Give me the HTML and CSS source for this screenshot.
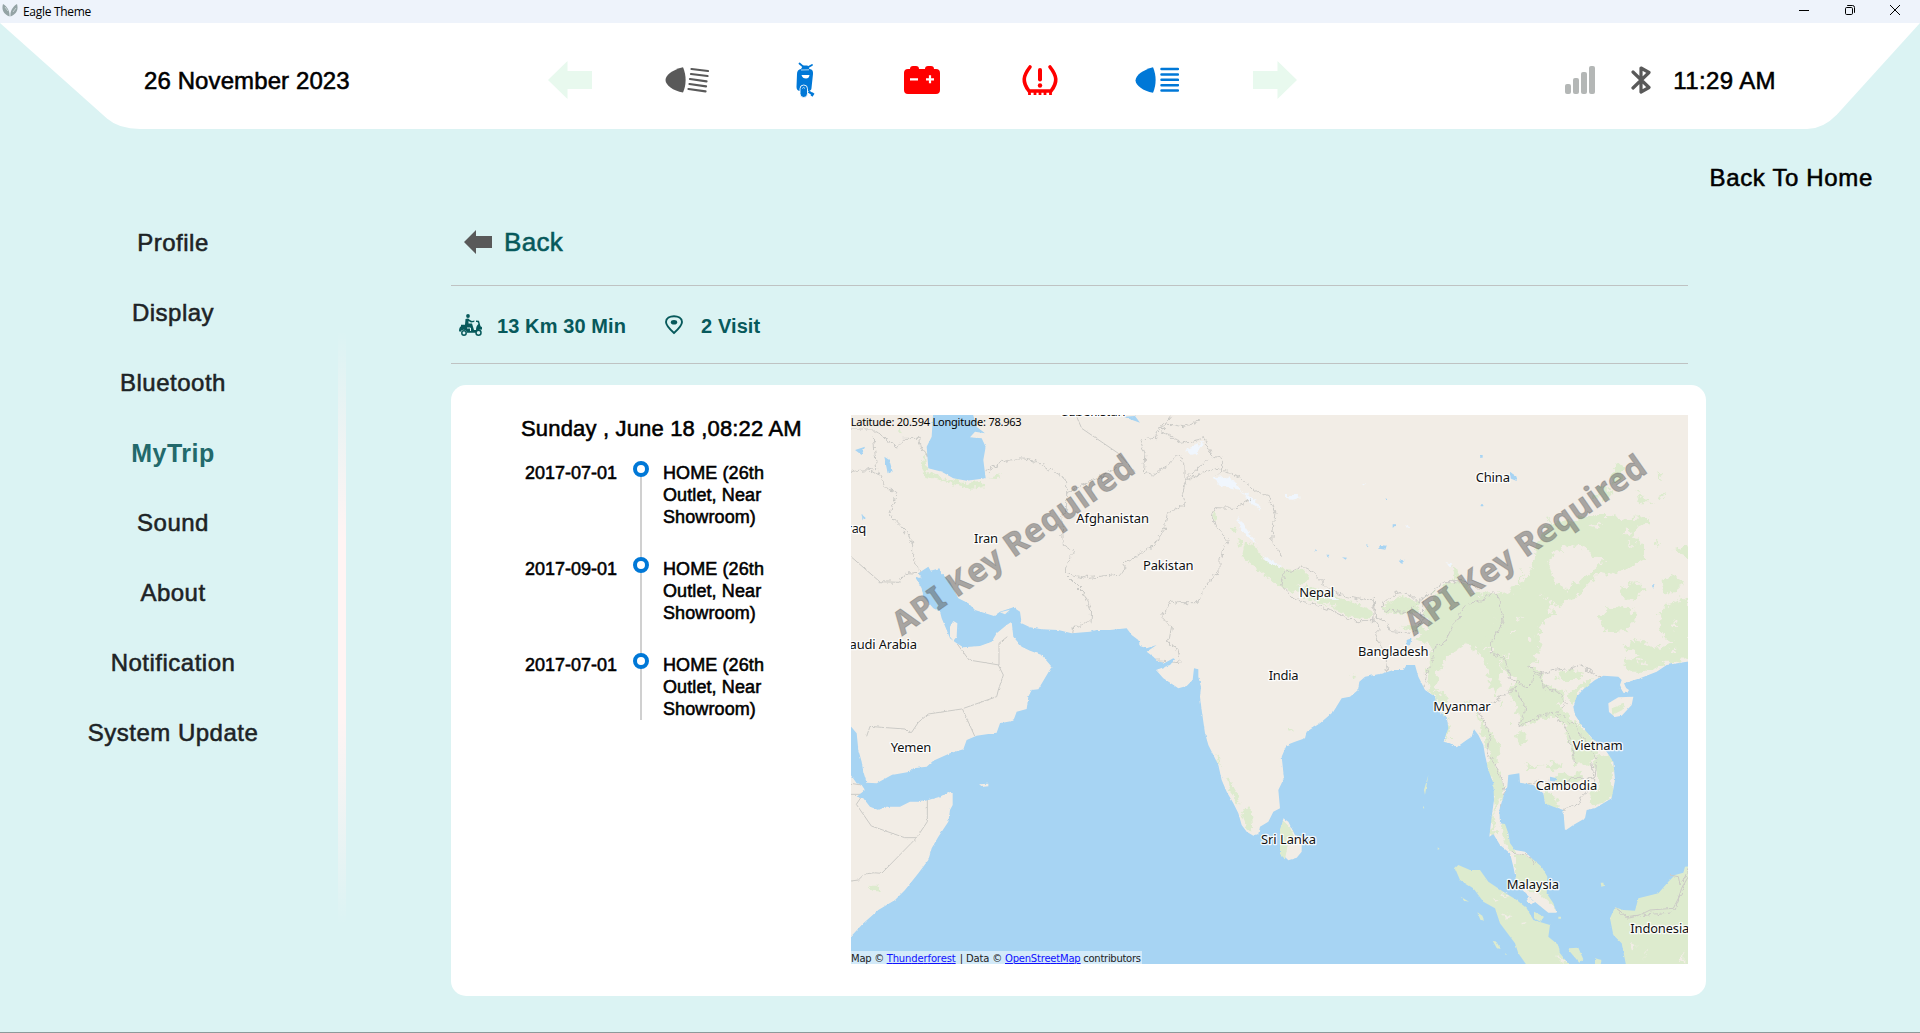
FILE: index.html
```html
<!DOCTYPE html>
<html lang="en">
<head>
<meta charset="utf-8">
<title>Eagle Theme</title>
<link rel="stylesheet" href="styles.css">
</head>
<body>
<div class="titlebar">
  <svg class="logo" viewBox="0 0 16 13"><path d="M1 0C-.5 5 1 10 7.500 12.500 8 8 6 3 1 0zM15 0C16.500 5 15 10 8.500 12.500 8 8 10 3 15 0z" fill="#94a3a5"/><path d="M3 3l3 4M14 4l-3 4" stroke="#d6dfe2" stroke-width=".8"/></svg>
  <span class="app-name">Eagle Theme</span>
  <div class="window-buttons">
    <svg viewBox="0 0 12 12"><path d="M1 6.500h10"/></svg>
    <svg viewBox="0 0 12 12"><path d="M3.200 1.500h5.300q2 0 2 2v5.300"/><rect x="1.500" y="3.500" width="7" height="7" rx="1.200"/></svg>
    <svg viewBox="0 0 12 12"><path d="M1 1l10 10M11 1L1 11"/></svg>
  </div>
</div>

<header class="header">
  <svg class="header-shape" viewBox="0 0 1920 106" preserveAspectRatio="none"><path d="M0 0H1920L1837 91.500Q1823 106 1807 106H140Q119 106 107 95.500Z" fill="#fff"/></svg>
  <div class="date">26 November 2023</div>
  <div class="indicators">
    <svg width="44" height="38" viewBox="0 0 44 38"><path d="M0 19L19.500 0V10H44V28H19.500V38Z" fill="#e8f9ee"/></svg>
    <svg width="44" height="26" viewBox="0 0 44 26"><path d="M18 .3C7 3 .8 8 .5 13 .5 18 8 24 18 25.400 21.500 18 21.500 8 18 .3z" fill="#595959"/><path d="M26.500 2l16.500 2M26 7l16.500 2M25 12l16.500 2.300M24.500 17l16.500 2.300M23.500 22l17 2.300" stroke="#595959" stroke-width="2.200" stroke-linecap="round"/></svg>
    <svg width="20" height="36" viewBox="0 0 20 36"><path d="M4.500 1.500l4 3.500 4 .5 4.500-2.500" fill="none" stroke="#0078d7" stroke-width="1.800" stroke-linecap="round"/><path d="M8 3.500h4.500l2 3.500c3 .5 3.700 2 3.500 5L16.500 26q0 2.500-3 3l-8 0Q1.500 29 1.500 25L2 12c0-3 1.500-4.500 4-5z" fill="#0078d7"/><path d="M6 8l8-.2" stroke="#fff" stroke-width=".7"/><path d="M6.500 13h8q-.5 3.500-3.500 3.500-3.500 0-4.500-3.500z" fill="#fff"/><rect x="5" y="23" width="7.500" height="12.500" rx="3.700" fill="#0078d7" stroke="#fff" stroke-width=".9"/><path d="M7.200 26.500q1.400-2 2.800 0" stroke="#fff" fill="none" stroke-width=".7"/><path d="M13.500 29.500l4.500 3M16.500 34l2-3" stroke="#0078d7" stroke-width="2.400"/></svg>
    <svg width="38" height="28" viewBox="0 0 38 28"><path d="M5 3h2q0-3 3-3h3q3 0 3 3h6q0-3 3-3h3q3 0 3 3h2q4 0 4 4v17q0 4-4 4H5q-4 0-4-4V7q0-4 4-4z" fill="red"/><path d="M7 13.300h8M23 13.300h8M27 9.300v8" stroke="#fff" stroke-width="2.200"/></svg>
    <svg width="38" height="32" viewBox="0 0 38 32"><g fill="none" stroke="red"><path d="M9 3C2 12 1 18 8 27h22C37 18 36 12 29 3" stroke-width="3.600" stroke-linecap="round"/><path d="M8.500 27v4M14 27v4M19 27v4M24 27v4M29.500 27v4" stroke-width="2.800"/><path d="M19 6v9.500" stroke-width="4" stroke-linecap="round"/></g><circle cx="19" cy="21.500" r="2.200" fill="red"/></svg>
    <svg width="44" height="26" viewBox="0 0 44 26"><path d="M18 .3C8 3 .8 8 .5 13.500.8 18.500 8 24 18 25.700 21.500 18 21.500 8 18 .3z" fill="#0078d7"/><path d="M26.500 2h16.500M26.500 7.500h16.500M26.500 12.800h16.500M26.500 18.200h16.500M26.500 23.500h16.500" stroke="#0078d7" stroke-width="2.500" stroke-linecap="round"/></svg>
    <svg width="44" height="38" viewBox="0 0 44 38"><path d="M44 19L24.500 0V10H0V28H24.500V38Z" fill="#e8f9ee"/></svg>
  </div>
  <div class="status">
    <svg class="signal" width="30" height="28" viewBox="0 0 30 28" fill="#b4b7b6"><rect y="18" width="6" height="10" rx="2"/><rect x="8" y="12" width="6" height="16" rx="2"/><rect x="16" y="6" width="6" height="22" rx="2"/><rect x="24" width="6" height="28" rx="2"/></svg>
    <svg class="bt" width="20" height="28" viewBox="0 0 20 28"><path d="M2 6l16 15.500-8 4.500V2l8 4.500L2 22" fill="none" stroke="#595959" stroke-width="3.200" stroke-linecap="round" stroke-linejoin="round"/></svg>
    <span>11:29 AM</span>
  </div>
</header>

<div class="home-row">Back To Home</div>

<main class="main">
  <nav class="menu">
    <div>Profile</div><div>Display</div><div>Bluetooth</div><div class="active">MyTrip</div><div>Sound</div><div>About</div><div>Notification</div><div>System Update</div>
  </nav>
  <div class="divider"></div>
  <section class="content">
    <div class="back">
      <svg width="28" height="24" viewBox="0 0 28 24"><path d="M0 12L12 0V6H28V18H12V24Z" fill="#595959"/></svg>
      <span>Back</span>
    </div>
    <div class="summary">
      <svg width="23" height="22" viewBox="0 0 23 22"><g fill="#07595b"><circle cx="9" cy="2" r="1.900"/><path d="M6.500 5q3-1.500 4 .7l2.500 1.300 2.500-.5-.3 1.500-3.200.5-2.500-1.500v2.500h3.500l2 6.500h2c0-3 1-5 2.500-6l-1-2h-1.500V6.500l3 .3 1.500 5.500q2 .5 2 3l-3 .5q-2 0-2 3H8q-.5-3-3.500-3-2 0-3 2l-1.500-.5q0-4 2-5v-1.500h4z"/></g><g fill="#dbf3f3" stroke="#07595b" stroke-width="1.500"><circle cx="5" cy="19" r="2.200"/><circle cx="19.500" cy="18.700" r="2.500"/></g><path d="M8 14h3.500v3" fill="none" stroke="#dbf3f3"/></svg>
      <b class="distance">13 Km 30 Min</b>
      <svg class="pin" width="20" height="20" viewBox="0 0 20 20"><path d="M10 18C5 13.500 2 10.500 2 7c0-4 4-5.800 8-5.800S18 3 18 7c0 3.500-3 6.500-8 11z" fill="none" stroke="#07595b" stroke-width="1.900"/><ellipse cx="10" cy="7.200" rx="3.200" ry="2.300" fill="#07595b"/></svg>
      <b>2 Visit</b>
    </div>
    <article class="card">
      <div class="trip">
        <h2>Sunday , June 18 ,08:22 AM</h2>
        <div class="stop"><time>2017-07-01</time><i class="track"></i><p>HOME (26th Outlet, Near Showroom)</p></div>
        <div class="stop"><time>2017-09-01</time><i class="track"></i><p>HOME (26th Outlet, Near Showroom)</p></div>
        <div class="stop last"><time>2017-07-01</time><i class="track"></i><p>HOME (26th Outlet, Near Showroom)</p></div>
      </div>
      <svg class="map" viewBox="3 15 2511 1647">
        <defs>
          <filter id="coast" x="-5%" y="-5%" width="110%" height="110%"><feTurbulence type="fractalNoise" baseFrequency=".09" numOctaves="3" seed="4"/><feDisplacementMap in="SourceGraphic" scale="7" xChannelSelector="R" yChannelSelector="G"/></filter>
          <filter id="woods" x="-5%" y="-5%" width="110%" height="110%"><feTurbulence type="fractalNoise" baseFrequency=".05" numOctaves="4" seed="9"/><feDisplacementMap in="SourceGraphic" scale="38" xChannelSelector="R" yChannelSelector="G"/></filter>
          <filter id="peaks" x="-5%" y="-5%" width="110%" height="110%"><feTurbulence type="fractalNoise" baseFrequency=".06" numOctaves="3" seed="2"/><feDisplacementMap in="SourceGraphic" scale="22" xChannelSelector="R" yChannelSelector="G"/></filter>
        </defs>
        <rect width="2520" height="1670" class="land"/>
        <g class="forest" filter="url(#peaks)">
          <path d="M222 120l10 65 50 20 60 15 50-8 10 20-45 5-60-20-65-15-18-30zM415 205l40-12-12 14zM1090 300l15 30-15-5zM1140 350l20 10-10 10zM1160 385l15 10-5 15zM1185 395l30 10 20 40 60 30 60 60-10 15-60-20-60-50-50-40z"/>
          <path d="M1225 455l50 10 45 30 -20 20-40-10zM1310 475l50 5 20 30-30 15-40-20zM1365 525l60 20 60 25 70 20 12 25-5 10-60-5-80-35-60-25zM1595 590l60-30 50 15 0 30-60 5-40-3zM1650 650l60-5 40 30-60-10z"/>
          <path d="M1096 1030l12 15 5 30-10-20zM1135 1105l20 30 15 50-30-40zM1172 1200l30-5 5 70-15-10zM55 1427l30 0 5 18-20-3zM1310 950l20 10-12 5zM1505 795l15 5-15 5zM150 50l5 20-8-2z"/>
        </g>
        <g class="forest" filter="url(#woods)">
          <path fill-rule="evenodd" d="M2140 335L2220 315 2270 315 2330 325 2400 320 2400 345 2360 355 2350 380 2385 410 2385 445 2340 465 2300 495 2250 485 2210 525 2170 570 2115 585 2100 575 2090 600 2115 610 2080 640 2060 680 2075 705 2050 740 2060 760 2040 770 2020 810 1970 795 1950 755 1930 710 1895 715 1895 670 1930 635 1930 580 1900 550 1940 550 1990 540 2030 505 2050 460 2055 410 2100 340ZM2095 460L2115 425 2160 405 2210 420 2260 455 2210 500 2150 540 2115 520Z"/>
          <path d="M1725 620L1740 570 1790 520 1830 510 1870 550 1935 560 1930 640 1895 700 1900 720 1935 715 1955 780 1940 860 1925 840 1910 770 1880 720 1850 700 1790 740 1765 780 1760 840 1738 840 1728 790 1750 710 1700 690 1735 660ZM1800 465l25 10 10 35-20-10zM2010 470l10 60-10-5z"/>
          <path d="M1975 840L2010 800 2035 770 2070 780 2080 820 2140 840 2145 870 2115 885 2160 920 2200 960 2240 1000 2235 1045 2225 1060 2170 1065 2165 1010 2145 945 2110 920 2060 930 2010 950 1995 880ZM2110 790l60-15 30 20-20 15-50 0zM2150 860l30-30 30-20 20 5-40 30-15 40z"/>
          <path d="M2245 625L2280 590 2345 595 2360 625 2330 660 2270 670ZM2425 660L2430 610 2460 580 2520 560V740L2450 760 2390 785 2340 785 2320 760 2370 735 2320 710 2370 690 2410 715 2470 700 2440 680ZM2435 520l35-25 35 15-25 40-40 0zM2310 530l40-15 35 25-35 30-35-10zM2470 420l50-12v35zM2310 385l50 5 10 25-30 0zM2410 395l20 5-5 8zM2360 240l20 20 25 20-30 0zM2295 160l30 10-10 40-30 10 0-30zM2365 275l20-20 5 20zM2425 180l14 10-10 18zM2425 255l20-10-10 20zM2250 225l40 20-20 25-40-10zM2090 330l20-4-5 14z"/>
          <path d="M2240 1030L2285 1040 2290 1110 2285 1160 2235 1190 2215 1170 2250 1120 2235 1070ZM2080 1130l30 20 20 50-45-20zM2110 1100l90-15-10 30-60 10zM1880 910L1920 960 1950 1010 1940 1060 1960 1130 1960 1160 1930 1200 1935 1270 1920 1270 1932 1170 1910 1060 1920 1030 1900 990ZM1770 900l25 20 2 60-12 20zM1995 970l30 0 10 30-30 5zM1950 870l10 20-15 5zM2020 1060l70 12-60 2zM2090 1062l50-2-30 20zM1850 870l12 3-8 8zM1738 840l50 10 10 40-25 0zM1980 930l10 4-8 8zM2010 910l4 20-8 0z"/>
        </g>
        <g class="forest" filter="url(#peaks)">
          <path d="M1995 1332L2045 1340 2085 1365 2105 1400 2105 1450 2125 1505 2090 1470 2060 1445 2020 1440 1995 1405ZM1950 1240l20 0 10 50 20 40-15 0-20-30zM2275 1350h260v340h-260z"/>
        </g>
        <g class="land" filter="url(#woods)"><path d="M2215 350l40-8-20 14zM2320 370l24-8-10 16zM2330 400l30 0-15 12zM2080 560l10 5-10 10zM2000 620l20 4-14 12zM2040 680l12 4-12 10zM1990 660l8 6-10 6zM1960 740l16-4-10 14zM2470 640l14 4-12 12zM2360 750l30 4-20 10zM2460 720l20-4-10 14zM2350 300l20 5-16 8zM1420 575l40 10-36 4z"/></g>
        <g class="snow" filter="url(#peaks)"><path d="M1005 120l55-25-20 35-15 5zM1090 205l40-5 30 20 20 30 30 10 20 40-30-20-30-40-60-15zM1160 320l20 20 20 30 20 30-30-20-20-30zM1235 440l30 10 30 20-40-10zM1305 255l35 0 10 10-30 5zM1780 457l30 3-10 10zM1840 500l40 20-30 0zM1410 545l60 25-30 0zM1665 343l10 5-5 5zM1540 218l8 2-6 4z"/></g>
        <g class="borders" filter="url(#peaks)">
          <path d="M3 187q40-15 80 0l30 50 30 5-25 70 55 60 15 30 0 40 25 50-45-5-20 30-62-2M3 60h70l20 15 50 38 20-28 45 0 10 40 30 20M70 80l10 100M90 75l50 35M410 182q90-60 165-18l75 45 0 95-15 10 5 90 30 20-28 65 60 60 20 50-2 35-50 20-5 50M642 489l70 14 110-12 5-35 80-45 35-50 10-50 55-30-10-30 15-50 60-50M870 90l45-5 50-65M870 90l15 40-5 60M650 250l150-75M880 190l30 5 45-30 30-30 20 30 0 45 60-25 40-10 60 25 60 50 30 10 20 50-10 80 30 50M1065 85l20 50 30 10 0 40-15 10M930 60l60 40 75-15M920 70l20-30 60 10 50-20M1205 265l-50 30-60-2-10 20 15 40 35 40-25 50 0 35-50 60-15 40-60 0-20-5-30 45 30 30-10 55 30 15 5 40-60-5-50 3"/>
          <path d="M1292 525l10-35 50-20 40 20 50 50 50 20 60 12 20-5 0 65-60 0-70-30-70-25-40-10zM1570 560l10 65 20 5 25 35 60 5 30-30 5-70M1595 590q60-80 110-10M1600 600l80 5 25-30 80-60 60 0 40 20M1570 625l20 30-20 20 30 40 10 60 6 20M1720 840l10-50 15-30 10-50 30-15 30-60 40-55 50-10 20-25 20 10 15 80-35 60 0 35 35 10 20 60 50 35 15-15 5-25 70-15 40-5 30-10 60 35 15 25M1885 900l90-50 20-20 30 60 -15 60 60-35 40-5 40 50 15 50 10 50M2035 770l35 20 10 40 50 20 20 30-30 25 50 40 40 50 30 55-5 55-70 0-30 15-60-5-40 10-20 30M2225 1060l10 60-40 40-10 25-40 10M1885 900l30 60 5 20-10 50 35 50 20 70-15 40M1985 1330l50 5 20 30 20-25M2300 1495l30 30 60-10 80-10 30-70 10-60"/>
        </g>
        <g class="borders" filter="url(#coast)">
          <path d="M3 440l85 74M680 20l15 35 110 75 50 55M322 702l35 48 90 15 0-65 25-20M445 765l15 30-15 45-5 20-105 37-100 15-30 25-20 30-10 0-10-10-70-5-35-3-10 30M337 896l37 82M232 1170v65l-32 48-36 0-100-35-45-65 20-30-36 0M200 1283L95 1390q-50-8-70 20l-22 3M3 1120l30 5"/>
        </g>
        <g class="water" filter="url(#coast)">
          <path d="M195 500L215 505 205 490 235 470 242 482 268 475 275 490 300 515 325 565 355 580 375 600 432 618 450 605 490 592 510 605 515 640 540 652 575 658 625 660 665 670 720 665 740 660 780 660 830 655 845 675 865 690 870 708 890 715 920 705 890 725 910 740 925 755 945 758 970 745 975 748 960 765 918 780 940 805 985 835 1010 828 1028 810 1032 775 1045 778 1045 800 1053 830 1050 860 1055 900 1065 970 1075 1005 1090 1035 1105 1065 1115 1110 1130 1145 1150 1180 1165 1210 1175 1245 1190 1265 1210 1277 1225 1272 1230 1250 1255 1235 1270 1205 1290 1195 1285 1140 1302 1105 1295 1040 1310 1005 1335 995 1365 985 1370 965 1410 940 1450 905 1475 865 1500 860 1524 840 1528 815 1545 800 1600 790 1630 780 1660 780 1670 765 1695 765 1705 800 1725 840 1755 860 1760 900 1790 920 1795 955 1780 995 1800 1000 1820 1012 1850 990 1865 980 1872 958 1885 975 1900 1005 1905 1035 1915 1080 1930 1120 1932 1170 1925 1220 1918 1280 1930 1272 1950 1305 1980 1330 1990 1370 1998 1410 2025 1450 2060 1480 2095 1508 2120 1508 2110 1480 2090 1450 2092 1400 2075 1370 2045 1345 2025 1325 1995 1320 1980 1300 1975 1270 1965 1242 1950 1240 1948 1200 1960 1160 1972 1130 1975 1095 2008 1090 2010 1118 2050 1125 2080 1150 2085 1180 2110 1190 2140 1200 2145 1262 2170 1245 2205 1225 2210 1200 2235 1195 2285 1165 2295 1110 2290 1055 2270 1025 2240 1000 2205 960 2175 915 2170 890 2180 860 2200 838 2235 810 2260 797 2305 800 2315 810 2310 825 2320 848 2333 845 2322 820 2370 805 2420 785 2450 765 2530 752V1368L2505 1370 2500 1388 2475 1395 2455 1415 2425 1450 2365 1465 2355 1502 2320 1500 2295 1492 2280 1525 2290 1575 2315 1600 2330 1675H-5V1588L40 1540 85 1500 135 1470 165 1440 205 1390 235 1350 245 1315 265 1280 295 1235 300 1200 308 1185 308 1150 295 1146 270 1160 235 1170 215 1175 180 1175 150 1190 110 1190 85 1200 60 1190 40 1165 20 1160 45 1140 35 1125 20 1120-5 1085V940L20 970 25 1020 35 1055 40 1085 50 1118 80 1120 125 1095 180 1085 190 1075 230 1070 250 1052 300 1030 340 1018 350 990 380 977 440 968 450 940 490 932 500 905 530 897 535 860 545 840 565 838 605 770 575 735 540 722 515 710 490 680 485 635 470 645 440 670 425 695 390 708 340 712 320 700 300 685 290 660 275 625 270 605 250 595 220 560 215 535Z"/>
          <path d="M250 0L245 80 230 110 235 175 275 185 310 205 350 212 407 205 400 150 407 110 395 85 360 82 375 65 405 70 380 50 365 0ZM103 140l15 10 10 35-15 5zM15 120l30-10-10 25zM820 20l50 18-15-20zM1980 185l20 15 0 13-20-8zM1588 405l22 2-4 12-18-3zM1646 452l20-3-12 12zM1476 442l15 1-4 6zM1428 434h10l-2 6zM1890 135h8v8h-8zM1892 283h8v6h-8zM1628 343h8v6h-8zM1548 403l10 3-6 6zM2405 526h9l-5 8zM1670 690l15-5-5 20-10 2zM2100 1100l20 5-5 10-15-3zM1605 266h6v4h-6zM1395 418l6 3-4 4zM34 312l14 13-10 3z"/>
        </g>
        <g class="land" filter="url(#coast)">
          <path d="M300 650l10-17 12 7-2 40-10 12-10-12zM388 1123l27-2 0 8-22 2zM450 607l30-8-15 14zM2275 880l30-18 45-2-5 25-30 32-20 4-18-15zM2312 835l10-5 15 10-5 8-10 0z"/>
          <path d="M1300 1225l15 10 20 40 20 20 0 30-15 18-25 8-20-20-5-45 5-30z"/>
        </g>
        <g class="forest" filter="url(#coast)">
          <path d="M1300 1232l20 20 15 35-20 10-10 50-15-15 0-75z"/>
          <path d="M1815 1375L1825 1365 1860 1380 1890 1380 1915 1415 1960 1445 2000 1470 2030 1495 2050 1530 2100 1545 2095 1580 2125 1605 2130 1630 2170 1680 2040 1680 2005 1630 1995 1600 1950 1540 1935 1495 1900 1475 1870 1435 1830 1410Z"/>
          <path d="M1832 1460l25 15-15-3zM1882 1507l15 10 6 15-12-3zM1928 1592l12 5 12 20-12-3zM1965 1630l6 3-4 2zM2155 1615l30-2 15 35-12 10-30-35zM2235 1645l20 5-5 20-15-5zM2252 1418l8 0 2 10-8 2zM2052 1505l30 15-10 15-20-10zM1735 1095l-10 60-3-15zM1720 1187l3 8-4 0zM1763 1312l6 5-6 2zM2125 1520h8v6h-8z"/>
          <path d="M2285 895l40-15-8 20-30 15z"/>
        </g>
        <g class="land" filter="url(#peaks)"><path d="M1955 1510l30 8-15 8zM1925 1465l25 5-15 5zM2010 1540l20-4-10 10zM2030 1458l35 25-30-5zM2120 1635l30 25 10 12-30-22zM2390 1620l-10 30 10-25zM2340 1600l20 5-14 14zM2500 1620l-10 40 10-5zM1315 1310l15 5-10 20zM1960 1450l20 10-30-3z"/></g>
        <g class="borders" filter="url(#coast)"><path d="M2300 1495l30 25 40-5 30-15 70-5 15-30 10-30 20-35M2460 1395l25 5 5 25 15-25"/></g>
        <g class="labels">
          <text x="630" y="19" textLength="197">Uzbekistan</text>
          <text x="-20" y="369" textLength="69">Iraq</text>
          <text x="372" y="400" textLength="72">Iran</text>
          <text x="679" y="339" textLength="218">Afghanistan</text>
          <text x="879" y="481" textLength="152">Pakistan</text>
          <text x="-22" y="718" textLength="223">Saudi Arabia</text>
          <text x="1877" y="215" textLength="103">China</text>
          <text x="1348" y="561" textLength="104">Nepal</text>
          <text x="1524" y="739" textLength="212">Bangladesh</text>
          <text x="1256" y="810" textLength="90">India</text>
          <text x="122" y="1025" textLength="122">Yemen</text>
          <text x="1233" y="1302" textLength="165">Sri Lanka</text>
          <text x="1750" y="902" textLength="172">Myanmar</text>
          <text x="2168" y="1019" textLength="150">Vietnam</text>
          <text x="2057" y="1140" textLength="185">Cambodia</text>
          <text x="1970" y="1436" textLength="157">Malaysia</text>
          <text x="2341" y="1569" textLength="177">Indonesia</text>
        </g>
        <g class="watermark">
          <text transform="translate(156 679) rotate(-35)" textLength="860">API Key Required</text>
          <text transform="translate(1692 679) rotate(-35)" textLength="860">API Key Required</text>
        </g>
        <text class="coords" x="2" y="48" textLength="513">Latitude: 20.594 Longitude: 78.963</text>
        <rect x="3" y="1623" width="873" height="39" fill="#fff" opacity=".5"/>
        <g class="credits">
          <text x="3" y="1656" textLength="100">Map ©</text>
          <text class="link" x="110" y="1656" textLength="207">Thunderforest</text>
          <text x="329" y="1656" textLength="128">| Data ©</text>
          <text class="link" x="465" y="1656" textLength="227">OpenStreetMap</text>
          <text x="700" y="1656" textLength="173">contributors</text>
        </g>
      </svg>
    </article>
  </section>
</main>
</body>
</html>
```

FILE: styles.css
```css
*, *::before { box-sizing: border-box; }

body {
  margin: 0;
  height: 1033px;
  overflow: hidden;
  background: #dbf3f3;
  border-bottom: 1px solid #8c9a9a;
  font-family: "Liberation Sans", Arial, sans-serif;
  font-size: 24px;
  color: #000;
  -webkit-text-stroke: .55px currentColor;
}

svg { display: block; flex: none; }

.titlebar {
  display: flex;
  align-items: center;
  height: 23px;
  padding: 0 19px 0 2px;
  background: #eef3fb;
}
.logo { width: 16px; height: 13px; margin-top: -3px; }
.app-name {
  margin-left: 5px;
  font: 12px "Open Sans", "Noto Sans", sans-serif;
  letter-spacing: -.3px;
  -webkit-text-stroke: 0;
}
.window-buttons {
  display: flex;
  gap: 33.500px;
  margin: -3px 0 0 auto;
}
.window-buttons svg {
  width: 12px;
  height: 12px;
  fill: none;
  stroke: #000;
  stroke-width: 1;
}

.header {
  position: relative;
  display: flex;
  align-items: center;
  height: 106px;
  padding: 0 144px;
}
.header-shape {
  position: absolute;
  inset: 0;
  width: 100%;
  height: 100%;
}
.header > div { position: relative; }
.date { width: 367px; padding-top: 9px; line-height: 28px; letter-spacing: .1px; }
.indicators {
  display: grid;
  grid-template-columns: repeat(7, 117.500px);
  justify-items: center;
  align-items: center;
  padding-top: 8px;
}
.status {
  display: flex;
  align-items: center;
  margin-left: auto;
  padding-top: 8px;
  line-height: 28px;
}
.status span { padding-top: 1px; letter-spacing: .4px; }
.bt { margin: 0 22px 0 36px; }

.home-row {
  margin: 35px 47px 0 0;
  line-height: 28px;
  text-align: right;
  letter-spacing: .65px;
}

.main { display: flex; margin-top: 16px; }
.menu {
  width: 338px;
  padding-left: 8px;
  color: #1d2326;
  line-height: 70px;
  text-align: center;
  letter-spacing: .5px;
}
.menu .active {
  color: #22696b;
  font-size: 25px;
  font-weight: bold;
  -webkit-text-stroke: 0;
}
.divider {
  width: 8px;
  height: 595px;
  margin-top: 122px;
  background: linear-gradient(#fff4f300, #fff4f3 35%, #fff4f3 65%, #fff4f300);
}

.content { width: 1255px; margin-left: 105px; color: #07595b; }
.back {
  display: flex;
  align-items: center;
  gap: 12px;
  height: 78px;
  width: 1237px;
  padding: 0 0 10px 13px;
  border-bottom: 1px solid #bfc2c2;
  font-size: 26px;
  letter-spacing: .3px;
}
.back span { padding-top: 1px; }
.summary {
  display: flex;
  align-items: center;
  width: 1237px;
  height: 78px;
  padding: 3px 0 0 8px;
  border-bottom: 1px solid #bfc2c2;
  font-size: 20px;
  letter-spacing: .1px;
  -webkit-text-stroke: 0;
}
.summary b { padding-top: 1px; }
.summary svg:first-child { margin-top: -3px; }
.distance { margin: 0 38px 0 15px; }
.summary .pin { margin: -2px 17px 0 0; }

.card {
  display: flex;
  height: 611px;
  margin-top: 21px;
  padding-top: 30px;
  border-radius: 15px;
  background: #fff;
  color: #000;
}
.trip { width: 400px; padding-left: 70px; }
h2 {
  margin: 0 0 18px;
  font-size: 22px;
  font-weight: normal;
  line-height: 28px;
  letter-spacing: .17px;
}
.stop {
  display: grid;
  grid-template-columns: 92px 16px 120px;
  column-gap: 16px;
  height: 96px;
  padding-left: 4px;
  font-size: 18px;
  line-height: 22px;
}
.last { height: 66px; }
.stop time, .stop p { margin: 1px 0 0; white-space: nowrap; }
.stop p { margin-left: -2px; white-space: normal; letter-spacing: .1px; }
.track { background: linear-gradient(#d0d0d0, #d0d0d0) center / 2px 100% no-repeat; }
.track::before {
  content: "";
  display: block;
  width: 16px;
  height: 16px;
  border: 4px solid #0078d7;
  border-radius: 50%;
  background: #fff;
}

.map { width: 837px; height: 549px; -webkit-text-stroke: 0; }
.land { fill: #f2ede6; }
.water { fill: #a7d4f3; }
.forest { fill: #ddebce; }
.snow { fill: #f0f6fd; }
.borders { fill: none; stroke: #cbcac6; stroke-width: 3; stroke-linejoin: round; }
.labels {
  font: 39px "Noto Sans", sans-serif;
  fill: #111;
  stroke: #fff;
  stroke-width: 8;
  stroke-opacity: .85;
  stroke-linejoin: round;
  paint-order: stroke;
}
.watermark {
  font: bold 98px "Noto Sans", sans-serif;
  fill: #555;
  fill-opacity: .48;
  stroke: #666;
  stroke-opacity: .35;
  stroke-width: 3;
}
.coords { font: 33px "Noto Sans", sans-serif; }
.credits { font: 30px "DejaVu Sans", sans-serif; fill: #222; }
.link { fill: #11f; text-decoration: underline; }
```
